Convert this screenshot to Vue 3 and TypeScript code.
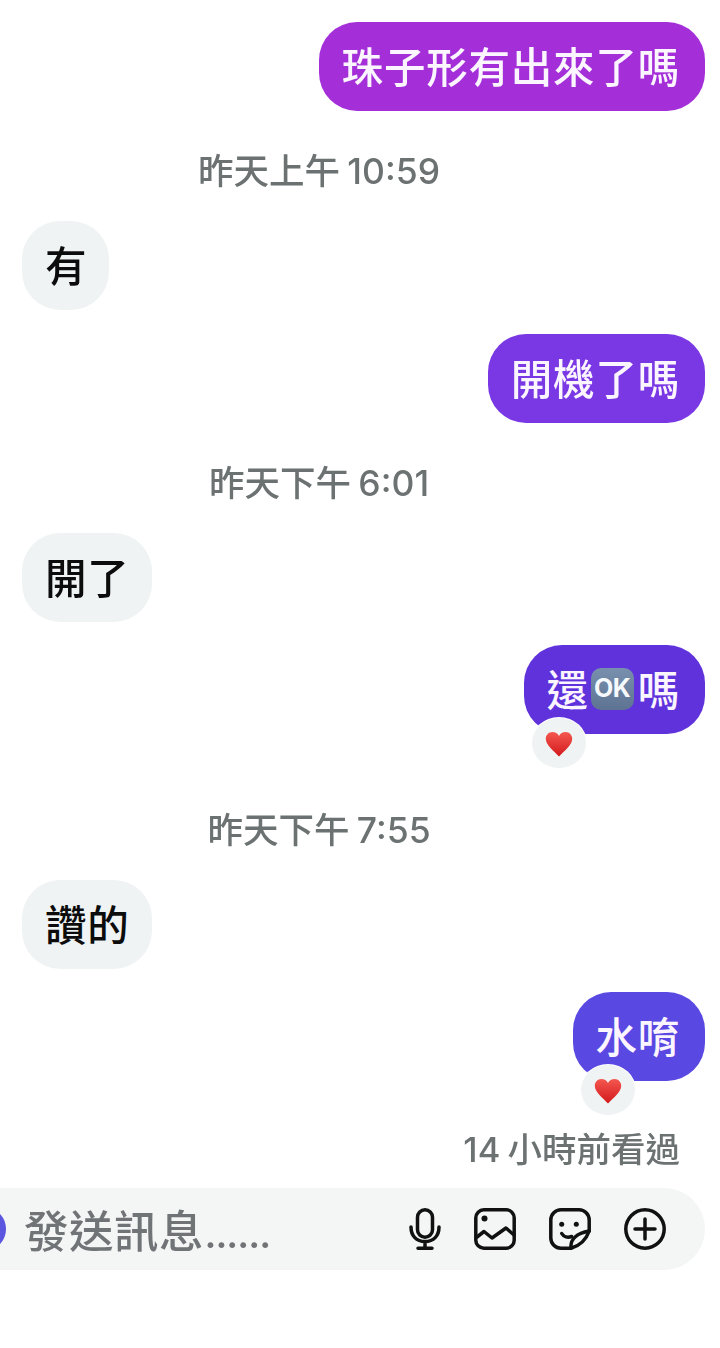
<script setup lang="ts">
interface Msg {
  id: number
  kind: 'time' | 'in' | 'out'
  text?: string
  color?: string
  heart?: boolean
  ok?: boolean
}

const messages: Msg[] = [
  { id: 1, kind: 'out', text: '珠子形有出來了嗎', color: '#a42fd9' },
  { id: 2, kind: 'time', text: '昨天上午 10:59' },
  { id: 3, kind: 'in', text: '有' },
  { id: 4, kind: 'out', text: '開機了嗎', color: '#7a38e4' },
  { id: 5, kind: 'time', text: '昨天下午 6:01' },
  { id: 6, kind: 'in', text: '開了' },
  { id: 7, kind: 'out', ok: true, heart: true, color: '#5f32dc' },
  { id: 8, kind: 'time', text: '昨天下午 7:55' },
  { id: 9, kind: 'in', text: '讚的' },
  { id: 10, kind: 'out', text: '水唷', heart: true, color: '#5a48e2' },
]
</script>

<template>
  <main class="page">
    <section class="thread">
      <template v-for="m in messages" :key="m.id">
        <p v-if="m.kind === 'time'" class="time">{{ m.text }}</p>
        <div v-else class="row" :class="[m.kind, { reacted: m.heart }]">
          <div class="bubble" :style="m.color ? { backgroundColor: m.color } : undefined">
            <template v-if="m.ok">還<span class="ok">OK</span>嗎</template>
            <template v-else>{{ m.text }}</template>
            <span v-if="m.heart" class="react">
              <svg class="heart" width="28" height="26" viewBox="0 0 28 26">
                <defs>
                  <linearGradient id="hg" x1="0" y1="0" x2="0" y2="1">
                    <stop offset="0" stop-color="#f4574f" />
                    <stop offset="1" stop-color="#d3191c" />
                  </linearGradient>
                </defs>
                <path d="M14 25.500C9 20 .8 14.500.8 7.800.8 3.800 3.800 1 7.400 1 10.300 1 12.800 2.400 14 5 15.200 2.400 17.700 1 20.600 1 24.200 1 27.200 3.800 27.200 7.800 27.200 14.500 19 20 14 25.500Z" fill="url(#hg)" />
              </svg>
            </span>
          </div>
        </div>
      </template>
    </section>

    <p class="seen">14 小時前看過</p>

    <div class="composer">
      <span class="dot"></span>
      <span class="placeholder">發送訊息<span class="dots">......</span></span>
      <div class="tools">
        <svg class="mic" width="32" height="42" viewBox="0 0 32 42" fill="none" stroke="#111" stroke-width="3.500" stroke-linecap="round">
          <rect x="8.500" y="1.800" width="15" height="27.500" rx="7.500" />
          <path d="M2 19c0 9 5.500 14.500 14 14.500S30 28 30 19M16 33.500v6.500M9 40.200h14" />
        </svg>
        <svg width="42" height="42" viewBox="0 0 42 42" fill="none" stroke="#111" stroke-width="3.500" stroke-linejoin="round" stroke-linecap="round">
          <rect x="1.800" y="1.800" width="38.400" height="38.400" rx="8" />
          <circle cx="10.500" cy="10.500" r="3" fill="#111" stroke="none" />
          <path d="M3 29l7-5.500 8 6.500 14-10 8 7" />
        </svg>
        <svg width="42" height="42" viewBox="0 0 42 42" fill="none" stroke="#111" stroke-width="3.500" stroke-linejoin="round" stroke-linecap="round">
          <path d="M22 40.200H12A10.200 10.200 0 0 1 1.800 30V12A10.200 10.200 0 0 1 12 1.800h18A10.200 10.200 0 0 1 40.200 12v11C37 32 30 38 22 40.200Z" />
          <path d="M22 40.200c-1-9 6-15 18.200-17.200" />
          <circle cx="12.700" cy="16.300" r="2.500" fill="#111" stroke="none" />
          <circle cx="27.300" cy="16.300" r="2.500" fill="#111" stroke="none" />
          <path d="M12.700 25.500c2 3.500 6 4.500 10 3" />
        </svg>
        <svg width="42" height="42" viewBox="0 0 42 42" fill="none" stroke="#111" stroke-width="3.500" stroke-linecap="round">
          <circle cx="21" cy="21" r="19.200" />
          <path d="M21 11v20M11 21h20" />
        </svg>
      </div>
    </div>
  </main>
</template>

<style>
html,
body {
  margin: 0;
  background: #fff;
}
</style>

<style scoped>
.page {
  width: 720px;
  height: 1348px;
  box-sizing: border-box;
  padding-top: 22px;
  overflow: hidden;
  font-family: Inter, "Noto Sans CJK TC", sans-serif;
  filter: blur(0.4px);
}
.thread {
  display: flex;
  flex-direction: column;
}
.row {
  display: flex;
  margin-bottom: 23px;
}
.row.in:nth-child(3) {
  margin-bottom: 24px;
}
.row.reacted {
  margin-bottom: 59px;
}
.row:last-child.reacted {
  margin-bottom: 23px;
}
.row.in {
  justify-content: flex-start;
  padding-left: 22px;
}
.row.out {
  justify-content: flex-end;
  padding-right: 15px;
}
.bubble {
  position: relative;
  display: flex;
  align-items: center;
  height: 89px;
  padding: 0 22px 2px 23px;
  border-radius: 38px;
  box-sizing: border-box;
  background: #eff3f4;
  color: #0c0c0c;
  font-family: "Noto Sans CJK TC", sans-serif;
  font-size: 41.500px;
  font-weight: 500;
  line-height: 1;
  letter-spacing: 0.800px;
}
.out .bubble {
  padding: 0 25px 2px 22.500px;
  color: #fbf5ff;
}
.ok {
  display: inline-flex;
  align-items: center;
  justify-content: center;
  width: 43px;
  height: 42px;
  margin: 0 4px 0 2px;
  border-radius: 10px;
  background: linear-gradient(#7890ae, #5d7391);
  color: #f6f9fc;
  font-family: Inter, sans-serif;
  font-size: 25px;
  font-weight: 700;
  letter-spacing: -0.500px;
}
.react {
  position: absolute;
  left: 8px;
  top: 73px;
  width: 54px;
  height: 50px;
  display: flex;
  align-items: center;
  justify-content: center;
  border-radius: 50%;
  background: #eff3f3;
  box-shadow: 0 0 0 1px #fff;
}
.heart {
  margin-top: 2px;
}
.time {
  margin: 16px 0 27px;
  height: 44px;
  line-height: 44px;
  text-align: center;
  padding-right: 82px;
  color: #6c7172;
  font-size: 35.500px;
  font-weight: 500;
  word-spacing: -2px;
}
.seen {
  margin: 24px 0 0;
  height: 44px;
  line-height: 44px;
  padding-right: 40px;
  text-align: right;
  color: #6c7172;
  font-size: 34.500px;
  font-weight: 500;
  word-spacing: -2px;
}
.composer {
  position: relative;
  display: flex;
  align-items: center;
  width: 705px;
  height: 82px;
  margin-top: 16px;
  padding: 0 39px 0 24px;
  box-sizing: border-box;
  border-radius: 0 41px 41px 0;
  background: #f4f5f5;
}
.dot {
  position: absolute;
  left: -30px;
  top: 21px;
  width: 36px;
  height: 40px;
  border-radius: 50%;
  background: #5a56e0;
}
.placeholder {
  flex: 1;
  color: #707476;
  font-size: 44.500px;
  font-weight: 500;
  font-family: "Noto Sans CJK TC", sans-serif;
  line-height: 1;
  letter-spacing: 0.500px;
}
.dots {
  font-family: Inter, sans-serif;
  font-size: 31px;
  font-weight: 800;
  letter-spacing: 0;
  margin-left: 1px;
}
.tools {
  display: flex;
  align-items: center;
  gap: 33px;
}
</style>
